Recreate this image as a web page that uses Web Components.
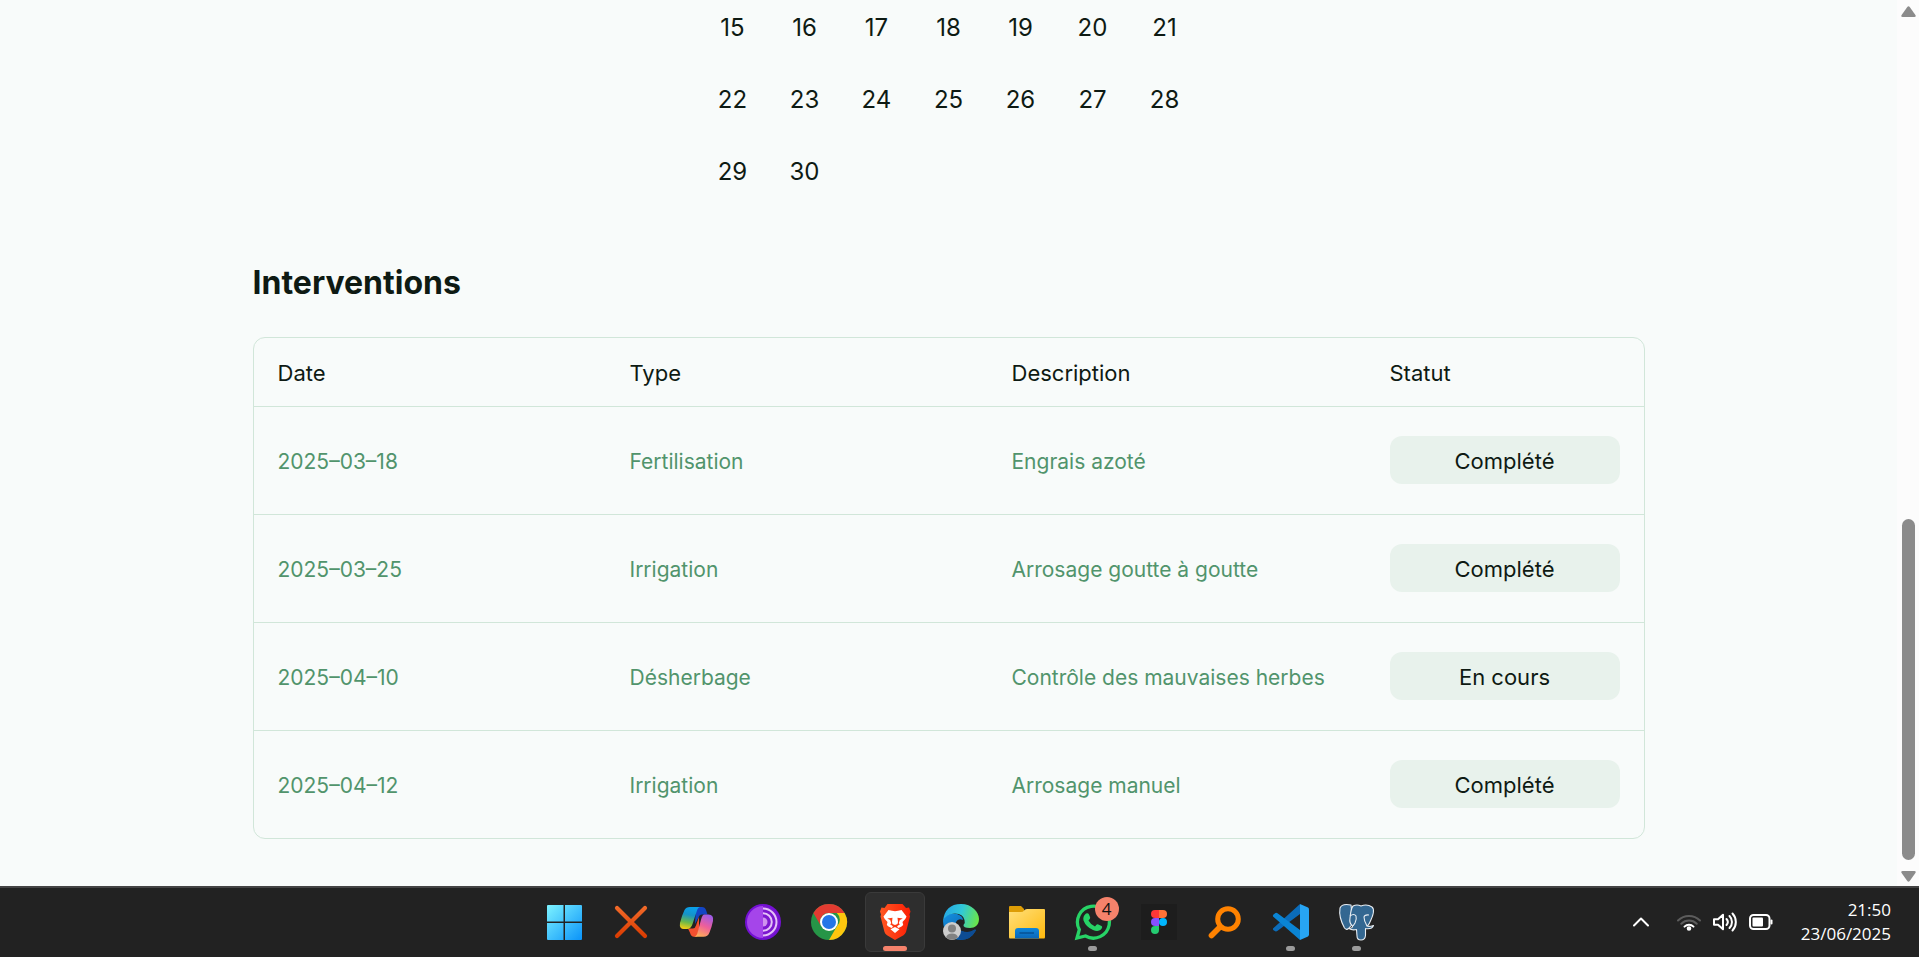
<!DOCTYPE html>
<html lang="fr">
<head>
<meta charset="utf-8">
<title>Interventions</title>
<style>
  html { height: 100%; }
  body {
    --ink: #0e1a13;
    --green: #51946c;
    --line: #d1e6d9;
    --soft: #e8f2ec;
    --page: #f8fbfa;
    margin: 0;
    height: 100%;
    display: flex;
    flex-direction: column;
    background: var(--page);
    color: var(--ink);
    font-family: Inter, "Noto Sans", sans-serif;
    overflow: hidden;
  }
</style>
</head>
<body>
<app-window>
  <month-grid first="15" last="30"></month-grid>
  <section-title>Interventions</section-title>
  <intervention-table></intervention-table>
</app-window>
<task-bar></task-bar>

<template id="t-window">
  <style>
    :host { flex: 1; min-height: 0; display: flex; }
    main { flex: 1; min-width: 0; display: flex; flex-direction: column; justify-content: flex-end; overflow: hidden; padding-bottom: 47px; }
    .column { display: flex; flex-direction: column; width: 100%; max-width: 1392px; margin: 0 auto; }
  </style>
  <main><div class="column"><slot></slot></div></main>
  <scroll-track></scroll-track>
</template>

<template id="t-scroll">
  <style>
    :host { width: 22px; box-sizing: border-box; display: flex; flex-direction: column; align-items: center; padding: 6px 0 4px; background: #fcfcfc; }
    svg { display: block; width: 15px; height: 12px; fill: #8b8b8b; }
    .rail { flex: 1; width: 13px; display: flex; flex-direction: column; justify-content: flex-end; padding: 10px 0; }
    .thumb { height: 41%; border-radius: 7px; background: #8b8b8b; }
  </style>
  <svg viewBox="0 0 15 12"><path d="M6.3 1Q7.5-.6 8.700 1l5.700 8q1 2-1 2H1.600q-2 0-1-2z"/></svg>
  <div class="rail"><div class="thumb"></div></div>
  <svg viewBox="0 0 15 12"><path d="M6.3 11Q7.500 12.600 8.700 11l5.700-8q1-2-1-2H1.600q-2 0-1 2z"/></svg>
</template>

<template id="t-month">
  <style>
    :host { display: grid; grid-template-columns: repeat(7, 72px); grid-auto-rows: 72px; justify-content: center; }
    button { margin: 0; padding: 2px 0 0; border: 0; background: none; color: inherit; font: 400 24px/36px Inter, "Noto Sans", sans-serif; }
  </style>
</template>

<template id="t-title">
  <style>
    :host { display: block; padding: 55px 0 33px; }
    h2 { margin: 0; font-size: 32px; line-height: 42px; font-weight: 700; }
  </style>
  <h2><slot></slot></h2>
</template>

<template id="t-table">
  <style>
    :host { display: block; border: 1px solid var(--line); border-radius: 12px; overflow: hidden; font-size: 21px; line-height: 32px; }
    table { width: 100%; table-layout: fixed; border-collapse: separate; border-spacing: 0; }
    th, td { box-sizing: border-box; padding: 2px 24px 0; text-align: left; white-space: nowrap; }
    th { height: 68px; font-size: 22px; font-weight: 400; }
    td { height: 108px; border-top: 1px solid var(--line); color: var(--green); font-weight: 400; }
    td:last-child { padding: 0 24px 1px; }
  </style>
  <table>
    <colgroup><col style="width:352px"><col style="width:382px"><col style="width:378px"><col style="width:278px"></colgroup>
    <thead><tr><th scope="col">Date</th><th scope="col">Type</th><th scope="col">Description</th><th scope="col">Statut</th></tr></thead>
    <tbody></tbody>
  </table>
</template>

<template id="t-status">
  <style>
    :host { display: block; }
    button { display: block; width: 100%; height: 48px; margin: 0; padding: 2px 24px 0; border: 0; border-radius: 12px; background: var(--soft); color: var(--ink); font: 400 22px/32px Inter, "Noto Sans", sans-serif; }
  </style>
  <button type="button"><slot></slot></button>
</template>

<template id="t-item">
  <style>
    :host { display: block; position: relative; width: 60px; height: 60px; }
    button { display: grid; place-items: center; width: 100%; height: 100%; margin: 0; padding: 0; border: 1px solid transparent; border-radius: 6px; background: none; }
    :host([state=active]) button { background: #2e2e2e; border-color: #3a3a3a; }
    svg { display: block; width: 36px; height: 36px; overflow: visible; }
    .mark { display: none; position: absolute; bottom: 1px; left: 0; right: 0; margin: 0 auto; width: 9px; height: 5px; border-radius: 3px; background: #9b9b9b; }
    :host([state]) .mark { display: block; }
    :host([state=active]) .mark { width: 24px; background: #f5826b; }
    .count { position: absolute; top: 5px; right: 4px; width: 24px; height: 24px; border-radius: 50%; background: #f5826b; color: #111; font: 400 17px/24px "Open Sans", sans-serif; text-align: center; }
    .count:empty { display: none; }
  </style>
  <button type="button"></button><span class="mark"></span><span class="count"></span>
</template>

<template id="t-bar">
  <style>
    :host { display: grid; grid-template-columns: 1fr auto 1fr; align-items: center; box-sizing: border-box; height: 71px; padding: 0 28px 1px 30px; border-top: 2px solid #444; background: #222; color: #fff; font-family: "Open Sans", "Noto Sans", sans-serif; }
    nav { grid-column: 2; display: flex; gap: 6px; }
    .tray { display: flex; align-items: center; justify-content: flex-end; }
    .tray button { display: block; margin: 0 28px 0 0; padding: 0; border: 0; background: none; }
    .quick { display: flex; gap: 12px; margin-right: 26px; }
    svg { display: block; width: 24px; height: 24px; fill: none; stroke: #fff; stroke-width: 2; stroke-linecap: round; stroke-linejoin: round; }
    button svg { width: 16px; }
    time { min-width: 92px; font-size: 17px; line-height: 24px; text-align: right; }
    time span { display: block; }
  </style>
  <nav aria-label="Applications"></nav>
  <div class="tray">
    <button type="button" aria-label="Icônes masquées"><svg viewBox="0 0 16 24"><path d="M1 15.500l7-7 7 7"/></svg></button>
    <div class="quick">
      <svg viewBox="0 0 24 24"><path d="M1 10.500a15.600 15.600 0 0 1 22 0M4.300 13.800a10.900 10.900 0 0 1 15.400 0" stroke="#5c5c5c"/><path d="M7.500 16.600a6.500 6.500 0 0 1 9 0"/><circle cx="12" cy="18.500" r="1.300" fill="#fff"/></svg>
      <svg viewBox="0 0 24 24"><path d="M1 9.300v5.400h4l5 4.600V4.700L5 9.300zM13.500 9a4.500 4.500 0 0 1 0 6M16.500 6a8.500 8.500 0 0 1 0 12M19.500 3.500a12.500 12.500 0 0 1 0 17"/></svg>
      <svg viewBox="0 0 24 24"><rect x="1" y="5" width="19.500" height="14" rx="3.500"/><rect x="3.500" y="7.500" width="10.500" height="9" rx="1" fill="#fff" stroke="none"/><path d="M22.500 10.500v3"/></svg>
    </div>
    <time datetime="2025-06-23T21:50"><span>21:50</span><span>23/06/2025</span></time>
  </div>
</template>

<script>
class TemplateElement extends HTMLElement {
  constructor() {
    super();
    const root = this.attachShadow({ mode: "open" });
    root.append(document.getElementById(this.constructor.template).content.cloneNode(true));
  }
}

const ICONS = {
  windows: `<linearGradient id="g" gradientUnits="userSpaceOnUse" x1="0" y1="1" x2="35" y2="36"><stop stop-color="#7df3ff"/><stop offset="1" stop-color="#0a93f9"/></linearGradient><path fill="url(#g)" d="M1 1h15.500v16.500H0V2q0-1 1-1zM18 1h16q1 0 1 1v15.500H18zM0 19h16.500v17H1q-1 0-1-1zM18 19h17v16q0 1-1 1H18z"/>`,
  cross: `<linearGradient id="g" gradientUnits="userSpaceOnUse" x1="0" y1="2" x2="0" y2="34"><stop stop-color="#f26b2a"/><stop offset="1" stop-color="#d93a00"/></linearGradient><path stroke="url(#g)" stroke-width="4.200" stroke-linecap="round" d="M4 4l28 28M32 4L4 32"/>`,
  copilot: `<linearGradient id="a" x1=".5" y1="0" x2=".3" y2="1"><stop stop-color="#0aa0ea"/><stop offset=".35" stop-color="#1593c8"/><stop offset=".7" stop-color="#6cb94a"/><stop offset="1" stop-color="#f3cf14"/></linearGradient><linearGradient id="b" x1=".7" y1="0" x2=".3" y2="1"><stop stop-color="#9d5be8"/><stop offset=".5" stop-color="#ee5f9a"/><stop offset="1" stop-color="#ffb056"/></linearGradient><path fill="#1345c4" d="M17 3h6q3 0 4 3l1.500 4.500H23q-2.500 0-3.500 3L16 20z"/><path fill="#f4502f" d="M9 24.500h5q2 0 3-3l3-8.500v12l-2 7.800h-3q-3 0-4-4z"/><path fill="url(#a)" d="M11 3h10.500q-2.500 0-3.500 3.500L13.500 20q-1.500 5-5.500 5H5q-5 0-4-6Q3 11 5.500 6 7 3 11 3z"/><path fill="url(#b)" d="M25.500 10.500h4q5.500 0 4.500 6.500-1.500 7-3.500 11.500-1.700 4.300-6 4.300H14.500q3 0 4-4l3.500-13q1.300-5.300 3.500-5.300z"/>`,
  tor: `<circle cx="18" cy="18" r="18" fill="#7410d4"/><path fill="#a545ea" d="M18 2a16 16 0 0 0 0 32z"/><path fill="#7c18cf" d="M18 2a16 16 0 0 1 0 32z"/><g fill="none" stroke="#e5c2f8" stroke-width="2"><path d="M18 4.500a13.500 13.500 0 0 1 0 27M18 9.200a8.800 8.800 0 0 1 0 17.600"/></g><path fill="#cf94ee" d="M18 13.500a4.500 4.500 0 0 1 0 9z"/>`,
  chrome: `<circle cx="18" cy="18" r="18" fill="#269547"/><path fill="#e23b31" d="M2.400 9A18 18 0 0 1 33.600 9H18a9 9 0 0 0-7.800 13.500z"/><path fill="#fdc60e" d="M33.600 9A18 18 0 0 1 18 36l7.800-13.500A9 9 0 0 0 25.800 9z"/><circle cx="18" cy="18" r="9" fill="#fff"/><circle cx="18" cy="18" r="7" fill="#2476e8"/>`,
  brave: `<linearGradient id="g"><stop stop-color="#ff5722"/><stop offset="1" stop-color="#fb1e05"/></linearGradient><path fill="url(#g)" d="M10.500 0h15l3.500 4 3-.5 1.500 4-1 3 .5 2-4 15.500q-.8 2-2.500 3.200L18 36l-8-4.800Q8 30 7.500 28L3.500 12.500l.5-2-1-3 1.500-4 3 .5z"/><path fill="#fff" d="M11.500 6l3.500.8q3 .8 6 0l3.500-.8 5 6.500q-.5 2-4 5.500l.7 3q-1 1.500-4.700 3l-1.500-1.200 1-1.300 1.800-1-1-1.500 1-3 3-1.500-5.300-.8.5 4.300-.5 2-2.500 1-2.500-1-.5-2 .5-4.300-5.300.8 3 1.500 1 3-1 1.500 1.800 1 1 1.300-1.500 1.200q-3.700-1.500-4.700-3l.7-3q-3.500-3.500-4-5.500zM18 23l4.500 2.300L18 29l-4.500-3.700z"/>`,
  edge: `<linearGradient id="a" x1="0" y1=".3" x2="1" y2=".5"><stop stop-color="#25a6e4"/><stop offset=".5" stop-color="#31c8d8"/><stop offset="1" stop-color="#69e64b"/></linearGradient><linearGradient id="b" x1="0" y1="0" x2="1" y2="1"><stop stop-color="#1591df"/><stop offset="1" stop-color="#0755a5"/></linearGradient><path fill="url(#b)" d="M0 17C2 10 9 8.500 14 10q6 2 6 6-5-2-7 2-1 6 5 9 8 3 14-1.500 1.500 0 .5 1.500Q28 35.500 18 36 1 35 0 17z"/><path fill="#0d4c94" d="M13 18q-1 7 6 9 7 2.500 13-1.500 1.500 0 .5 1.500Q28 35.500 18 36 8 31 13 18z"/><path fill="url(#a)" d="M0 17Q2 0 18 0c11 0 18 8 18 15 0 6-4 9-9 9q-7 0-6.500-3 2-2 1-5Q20 9 11 9.500 3 10 0 17z"/><circle cx="9" cy="27" r="9" fill="#cdcdcd"/><circle cx="9" cy="24.500" r="4" fill="#828282"/><path fill="#828282" d="M3 33.500q1-4 6-4t6 4Q9 38 3 33.500z"/>`,
  folder: `<linearGradient id="g" x1="0" y1="0" x2="1" y2="1"><stop stop-color="#ffe07c"/><stop offset="1" stop-color="#ffb90d"/></linearGradient><linearGradient id="h" x1="0" y1="0" x2="0" y2="1"><stop stop-color="#0f87d9"/><stop offset="1" stop-color="#0b66b8"/></linearGradient><path fill="#dd9d06" d="M1 2h11l3 3v8H0V3q0-1 1-1z"/><path fill="url(#g)" d="M0 8h12q2 0 3-1.500T18 5h17q1 0 1 1v27q0 1.500-1 1.500H1q-1 0-1-1.500z"/><path fill="url(#h)" d="M6 34.500V27q0-3 3-3h18q3 0 3 3v7.500z"/><path stroke="#074f91" stroke-width="1.400" d="M10.500 29h14.500"/>`,
  whatsapp: `<path fill="none" stroke="#27d366" stroke-width="3.300" d="M2 34l2.300-8.400A16 16 0 1 1 10.500 32z"/><path fill="#27d366" d="M11 9.500q2-1 3 1l1.200 3q.3 1-1.700 3 2 4 6.500 6 1.800-2.500 2.800-2.200l3.700 1.700q1.500 1-.5 3.500-3 2.500-8 .5-7-3-9.500-9.500-1-4 2.500-7z"/>`,
  figma: `<path fill="#1d1d1d" d="M0 0h36v36H0z"/><path fill="#ff3737" d="M14 6h4v8h-4a4 4 0 0 1 0-8z"/><path fill="#ff7237" d="M18 6h4a4 4 0 0 1 0 8h-4z"/><path fill="#874fff" d="M14 14h4v8h-4a4 4 0 0 1 0-8z"/><circle cx="22" cy="18" r="4" fill="#00b6ff"/><path fill="#24cb71" d="M14 22h4v4a4 4 0 1 1-4-4z"/>`,
  search: `<g fill="none" stroke="#ff8200" stroke-linecap="round"><circle cx="21" cy="15" r="10.300" stroke-width="5"/><path stroke-width="5.600" d="M13 23l-8.500 8.500"/></g>`,
  vscode: `<path fill="#0b6cba" d="M27 0L5.500 19.500 0 24.500q-.3 1 .5 1.800l1.800 1q1 .5 2-.3L27 10z"/><path fill="#0a84d4" d="M27 36L0 12.500q-.5-1.200.5-2L2.500 9q1-.5 2 .3L27 26z"/><path fill="#27a5f4" d="M27 0l8 3.600q1 .6 1 2V30.500q0 1.300-1 1.900L27 36z"/>`,
  postgres: `<g fill="#336791" stroke="#e8edf2" stroke-width="1.100" stroke-linejoin="round"><path d="M12 1Q3-1 1 4q-1.500 9 4.500 20 2 2.500 4 .5l4.500-5z"/><path d="M22 2q6-2.500 11 1 4 3-2.500 16-1 2.500-2.500 3 2 1 6.500-.5-1.500 4-8 3v7q-.5 4.500-4.500 4.500T18 32l-.5-6.500q-4.500 1-7.500-1 4-.5 3.500-2.500-3.500-3-2.500-8 1-10 3-12 4-2 8 0z"/><path fill="none" d="M11 12q4-3 6 0 1 3-1 7l-2 3M28 22q-3-5-3-9 .5-2.500 5-2"/></g>`
};

customElements.define("scroll-track", class extends TemplateElement { static template = "t-scroll"; });
customElements.define("app-window", class extends TemplateElement { static template = "t-window"; });
customElements.define("section-title", class extends TemplateElement { static template = "t-title"; });
customElements.define("status-button", class extends TemplateElement { static template = "t-status"; });

customElements.define("month-grid", class extends TemplateElement {
  static template = "t-month";
  connectedCallback() {
    for (let d = +this.getAttribute("first"); d <= +this.getAttribute("last"); d++) {
      const b = document.createElement("button");
      b.type = "button";
      b.textContent = d;
      this.shadowRoot.append(b);
    }
  }
});

customElements.define("intervention-table", class extends TemplateElement {
  static template = "t-table";
  connectedCallback() {
    const rows = [
      ["2025-03-18", "Fertilisation", "Engrais azoté", "Complété"],
      ["2025-03-25", "Irrigation", "Arrosage goutte à goutte", "Complété"],
      ["2025-04-10", "Désherbage", "Contrôle des mauvaises herbes", "En cours"],
      ["2025-04-12", "Irrigation", "Arrosage manuel", "Complété"]
    ];
    this.shadowRoot.querySelector("tbody").innerHTML = rows.map(([date, type, text, status]) =>
      `<tr><td>${date.replace(/-/g, "–")}</td><td>${type}</td><td>${text}</td><td><status-button>${status}</status-button></td></tr>`).join("");
  }
});

customElements.define("task-item", class extends TemplateElement {
  static template = "t-item";
  connectedCallback() {
    const button = this.shadowRoot.querySelector("button");
    button.setAttribute("aria-label", this.getAttribute("label"));
    button.innerHTML = `<svg viewBox="0 0 36 36" aria-hidden="true">${ICONS[this.getAttribute("icon")]}</svg>`;
    this.shadowRoot.querySelector(".count").textContent = this.getAttribute("count") || "";
  }
});

customElements.define("task-bar", class extends TemplateElement {
  static template = "t-bar";
  connectedCallback() {
    const items = [
      ["windows", "Démarrer"], ["cross", "Raccourci"], ["copilot", "Copilot"], ["tor", "Tor"],
      ["chrome", "Chrome"], ["brave", "Brave", "active"], ["edge", "Edge"], ["folder", "Explorateur"],
      ["whatsapp", "WhatsApp", "open", 4], ["figma", "Figma"], ["search", "Recherche"],
      ["vscode", "Visual Studio Code", "open"], ["postgres", "PostgreSQL", "open"]
    ];
    this.shadowRoot.querySelector("nav").innerHTML = items.map(([icon, label, state, count]) =>
      `<task-item icon="${icon}" label="${label}"${state ? ` state="${state}"` : ""}${count ? ` count="${count}"` : ""}></task-item>`).join("");
  }
});
</script>
</body>
</html>
